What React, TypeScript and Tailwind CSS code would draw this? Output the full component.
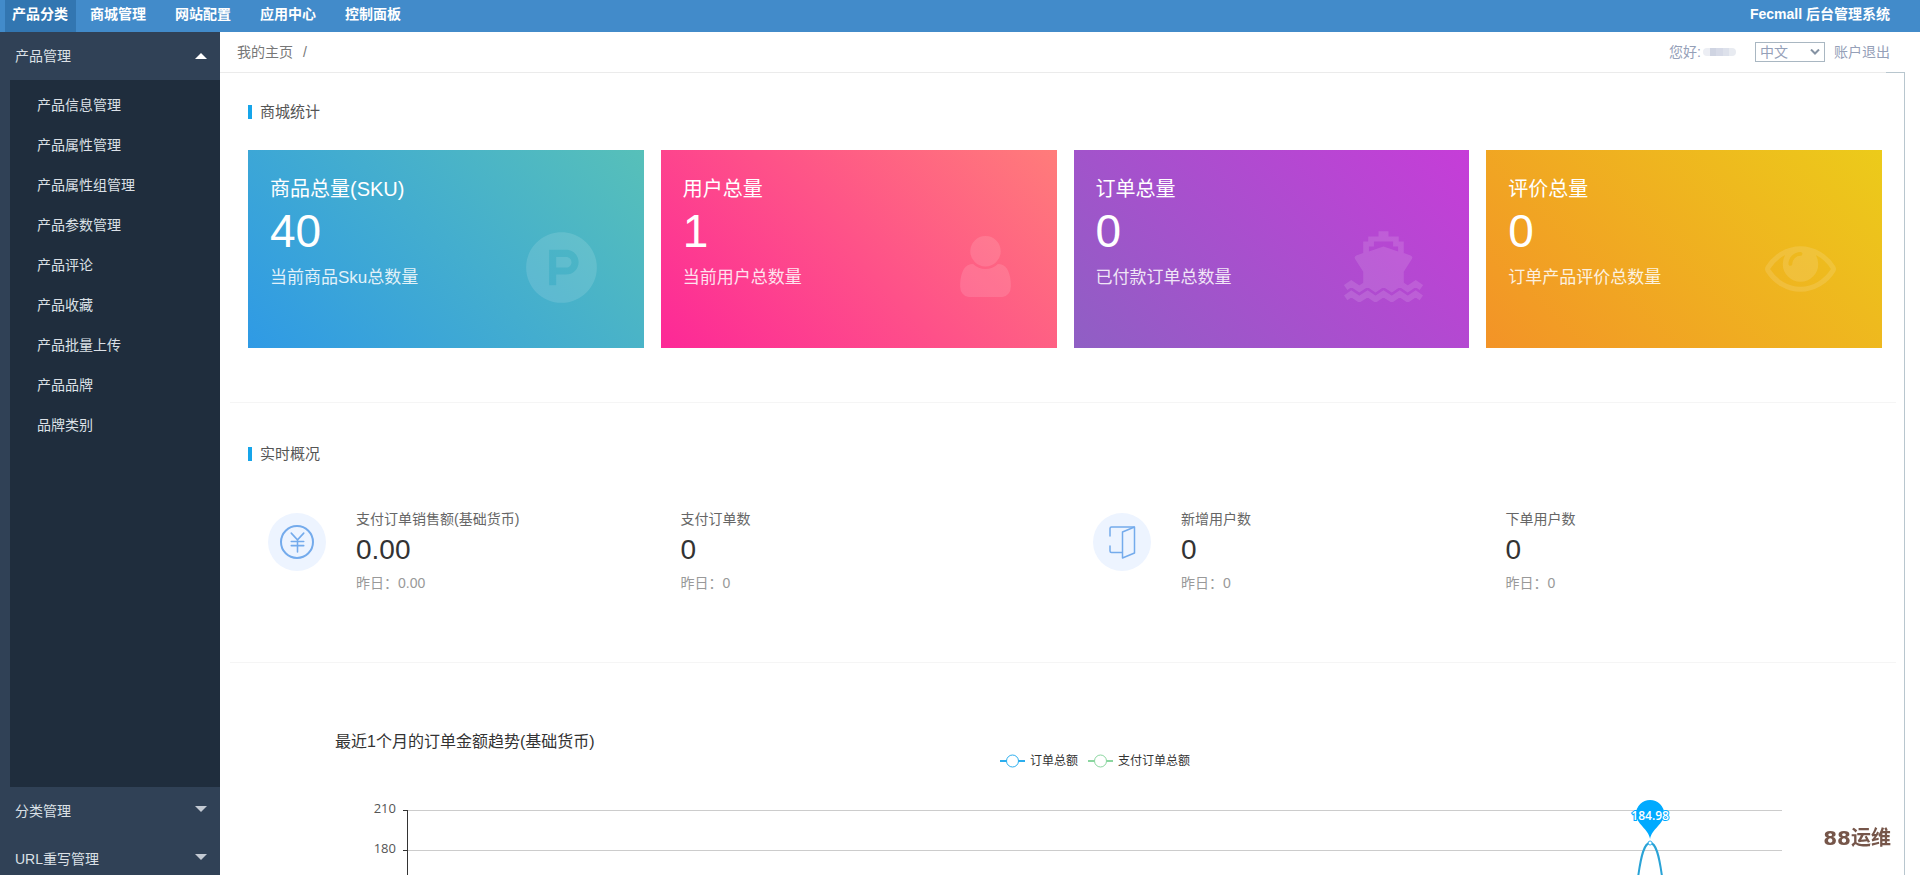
import type { ReactNode } from "react";
import { JapaneseYen } from "lucide-react";
import { FaProductHunt } from "react-icons/fa";

const NAV_ITEMS = ["商城管理", "网站配置", "应用中心", "控制面板"];

const SUB_MENU = [
  "产品信息管理",
  "产品属性管理",
  "产品属性组管理",
  "产品参数管理",
  "产品评论",
  "产品收藏",
  "产品批量上传",
  "产品品牌",
  "品牌类别",
];

const CARDS = [
  {
    title: "商品总量(SKU)",
    value: "40",
    note: "当前商品Sku总数量",
    color: "from-[#2f9ae5] to-[#57c0b9]",
    icon: <FaProductHunt className="size-[73px]" />,
  },
  {
    title: "用户总量",
    value: "1",
    note: "当前用户总数量",
    color: "from-[#fd2897] to-[#ff7c7a]",
    icon: <UserIcon />,
  },
  {
    title: "订单总量",
    value: "0",
    note: "已付款订单总数量",
    color: "from-[#8f5fc4] to-[#c63dd8]",
    icon: <ShipIcon />,
  },
  {
    title: "评价总量",
    value: "0",
    note: "订单产品评价总数量",
    color: "from-[#f39327] to-[#eccb1a]",
    icon: <EyeIcon />,
  },
];

const Y_TICKS = [210, 180];

function UserIcon() {
  return (
    <svg viewBox="256 0 1280 1792" className="h-[71px] w-[51px]" fill="currentColor">
      <path d="M1536 1399q0 109-62.5 187t-150.5 78h-854q-88 0-150.5-78t-62.5-187q0-85 8.5-160.5t31.5-152 58.5-131 94-89 134.5-34.5q131 128 313 128t313-128q76 0 134.5 34.5t94 89 58.5 131 31.5 152 8.5 160.5zm-256-887q0 159-112.5 271.5t-271.5 112.5-271.5-112.5-112.5-271.5 112.5-271.5 271.5-112.5 271.5 112.5 112.5 271.5z" />
    </svg>
  );
}

function ShipIcon() {
  return (
    <svg viewBox="0 0 238 213" className="h-[71px] w-[79px]" fill="none">
      <path
        fill="currentColor"
        fillRule="evenodd"
        d="M104 0H134V16H165V31H180V66L201 73Q209 77 204 85L180 122V166H58V122L34 85Q29 77 37 73L58 66V31H73V16H104ZM90 31V46H75V61L119 46L163 61V46H148V31Z"
      />
      <g stroke="currentColor" strokeWidth="18" strokeLinejoin="miter">
        <path d="M5 170L22 158L46 174L71 158L95 174L119 158L144 174L168 158L192 174L216 158L233 170" />
        <path d="M5 201L22 189L46 205L71 189L95 205L119 189L144 205L168 189L192 205L216 189L233 201" />
      </g>
    </svg>
  );
}

function EyeIcon() {
  return (
    <svg viewBox="0 0 1792 1792" className="size-[71px]" fill="currentColor">
      <path d="M1664 960q-152-236-381-353 61 104 61 225 0 185-131.5 316.5t-316.5 131.5-316.5-131.5-131.5-316.5q0-121 61-225-229 117-381 353 133 205 333.5 326.5t434.5 121.5 434.5-121.5 333.5-326.5zm-720-384q0-20-14-34t-34-14q-125 0-214.5 89.5t-89.5 214.5q0 20 14 34t34 14 34-14 14-34q0-86 61-147t147-61q20 0 34-14t14-34zm848 384q0 34-20 69-140 230-376.5 368.5t-499.5 138.5-499.5-139-376.5-368q-20-35-20-69t20-69q140-229 376.5-368t499.5-139 499.5 139 376.5 368q20 35 20 69z" />
    </svg>
  );
}

function DoorIcon() {
  return (
    <svg
      viewBox="0 0 27 33"
      className="h-[33px] w-[27px]"
      fill="none"
      stroke="currentColor"
      strokeWidth="1.5"
      strokeLinejoin="round"
      strokeLinecap="round"
    >
      <path d="M1 10V2.5Q1 1 2.500 1H25" />
      <path d="M1 20V25Q1 26.500 2.500 26.500H13" />
      <path d="M13.500 6L25.500 1V27L13.500 32Z" />
    </svg>
  );
}

function Caret({ up }: { up?: boolean }) {
  return (
    <svg viewBox="0 0 12 6" className={up ? "h-[6px] w-3 text-white" : "mb-1 h-[6px] w-3 text-[#c3cad3]"}>
      <path fill="currentColor" d={up ? "M6 0L12 6H0Z" : "M0 0H12L6 6Z"} />
    </svg>
  );
}

function MenuTitle({ label, open }: { label: string; open?: boolean }) {
  return (
    <button className="flex h-12 w-full shrink-0 items-center justify-between pr-[13px] pl-[15px] text-[#dbe0e6]">
      {label}
      <Caret up={open} />
    </button>
  );
}

function SectionTitle({ children }: { children: ReactNode }) {
  return (
    <h2 className="flex h-[30px] items-center gap-2 pl-[18px] text-[15px] text-[#555]">
      <span className="h-[14px] w-1 bg-[#16a5ea]" />
      {children}
    </h2>
  );
}

function Stat({ label, value }: { label: string; value: string }) {
  return (
    <div>
      <p className="leading-5 text-[#666]">{label}</p>
      <p className="text-[28px] leading-[42px] text-[#333]">{value}</p>
      <p className="mt-[2px] leading-5 text-[#999]">昨日：{value}</p>
    </div>
  );
}

function StatGroup({ icon, children }: { icon: ReactNode; children: ReactNode }) {
  return (
    <div className="flex pr-[58px] pl-[30px]">
      <div className="mt-1 mr-[30px] flex size-[58px] shrink-0 items-center justify-center rounded-full bg-[#edf4ff] text-[#74abec]">
        {icon}
      </div>
      <div className="grid flex-1 grid-cols-2">{children}</div>
    </div>
  );
}

function LegendItem({ label, color }: { label: string; color: string }) {
  return (
    <span className="flex items-center gap-[5px]">
      <svg viewBox="0 0 25 14" className="h-[14px] w-[25px]" fill="#fff" stroke={color}>
        <path d="M0 7H25" strokeWidth="2" />
        <circle cx="12.5" cy="7" r="6" />
      </svg>
      {label}
    </span>
  );
}

function OrderChart() {
  return (
    <div className="pt-[69px] pr-[41px] pl-[105px]">
      <h3 className="text-base leading-5 text-[#333]">最近1个月的订单金额趋势(基础货币)</h3>
      <div className="mt-px flex h-4 items-center justify-center gap-[10px] text-xs text-[#333]">
        <LegendItem label="订单总额" color="#2caeee" />
        <LegendItem label="支付订单总额" color="#8bd6a0" />
      </div>
      <div className="mt-[26px] px-[73px]">
        <svg className="h-20 w-full overflow-visible">
          {Y_TICKS.map((tick, i) => (
            <g key={tick}>
              <line x1="0" x2="100%" y1={15.5 + i * 40} y2={15.5 + i * 40} stroke="#ccc" />
              <line x1="-5" x2="0" y1={15.5 + i * 40} y2={15.5 + i * 40} stroke="#333" />
              <text
                x="-12"
                y={18 + i * 40}
                textAnchor="end"
                className="fill-[#555] font-['Open_Sans',sans-serif] text-[13px]"
              >
                {tick}
              </text>
            </g>
          ))}
          <line x1="-0.5" x2="-0.5" y1="15" y2="80" stroke="#333" />
          <svg x="90.4%" y="0" className="overflow-visible">
            <path
              d="M-12 82C-9 60 -6 48 0 48C6 48 9 60 12 82"
              fill="none"
              stroke="#2aa3d6"
              strokeWidth="2"
            />
            <path
              d="M0 44C-1.500 34 -14 29 -14 19A14 14 0 0 1 14 19C14 29 1.500 34 0 44Z"
              fill="#00aaff"
            />
            <circle cx="0" cy="48" r="2" fill="#fff" stroke="#2caeee" />
            <text
              x="0"
              y="25"
              textAnchor="middle"
              stroke="#00aaff"
              strokeWidth="2"
              paintOrder="stroke"
              className="fill-white font-['Open_Sans',sans-serif] text-[12px] font-semibold"
            >
              184.98
            </text>
          </svg>
        </svg>
      </div>
    </div>
  );
}

export default function App() {
  return (
    <div className="flex h-screen flex-col overflow-hidden bg-white font-['Liberation_Sans','Noto_Sans_CJK_SC',sans-serif] text-sm">
      <header className="flex h-8 shrink-0 items-stretch justify-between bg-[#428bca] font-bold text-white">
        <nav className="flex pl-[5px]">
          <a href="#" className="flex items-center bg-[#3276b1] pr-2 pb-1 pl-[7px]">
            产品分类
          </a>
          {NAV_ITEMS.map((item) => (
            <a key={item} href="#" className="flex items-center pr-[15px] pb-1 pl-[14px]">
              {item}
            </a>
          ))}
        </nav>
        <span className="flex items-center pr-[30px] pb-1">Fecmall 后台管理系统</span>
      </header>

      <div className="flex min-h-0 flex-1">
        <aside className="-mb-2 flex w-[220px] shrink-0 flex-col bg-[#304156]">
          <MenuTitle label="产品管理" open />
          <ul className="ml-[10px] flex-1 bg-[#1f2d3d] pt-[5px]">
            {SUB_MENU.map((item) => (
              <li key={item}>
                <a href="#" className="flex h-10 items-center pl-[27px] text-[#dbe0e6]">
                  {item}
                </a>
              </li>
            ))}
          </ul>
          <MenuTitle label="分类管理" />
          <MenuTitle label="URL重写管理" />
        </aside>

        <main className="flex min-w-0 flex-1 flex-col">
          <div className="flex h-10 shrink-0 items-center pr-[30px] pl-[17px] text-[#95a0b8]">
            <a href="#" className="text-[#777]">
              我的主页
            </a>
            <span className="ml-[10px] text-[#777]">/</span>
            <span className="ml-auto">您好:</span>
            {/* masked account name */}
            <span className="mr-[19px] ml-[2px] flex h-2 w-[33px] overflow-hidden rounded-sm">
              <span className="flex-1 bg-[#eceef4]" />
              <span className="flex-1 bg-[#cfd4e2]" />
              <span className="flex-1 bg-[#d6dae7]" />
              <span className="flex-1 bg-[#dde1eb]" />
              <span className="flex-1 bg-[#e8ebf1]" />
            </span>
            <span className="relative mr-[9px]">
              <select
                aria-label="语言"
                className="block h-5 w-[70px] appearance-none border border-[#a9b7c2] bg-white pl-1 text-sm leading-4 text-[#95a0b8]"
              >
                <option>中文</option>
                <option>English</option>
              </select>
              <svg
                viewBox="0 0 10 6"
                className="pointer-events-none absolute top-[7px] right-[5px] h-[6px] w-[10px]"
                fill="none"
                stroke="#8592a3"
                strokeWidth="2"
              >
                <path d="M1 0.500L5 4.500L9 0.500" />
              </svg>
            </span>
            <a href="#">账户退出</a>
          </div>
          <div className="flex h-px shrink-0 pr-[15px]">
            <span className="flex-1 bg-[#ebebeb]" />
            <span className="w-[19px] bg-[#b8c6ce]" />
          </div>

          <div className="mr-[15px] min-h-0 flex-1 overflow-hidden border-r border-[#b8c6ce] pr-2 pl-[10px]">
            <section className="border-b border-[#f5f5f5] pt-6 pb-[54px]">
              <SectionTitle>商城统计</SectionTitle>
              <div className="mt-[23px] grid grid-cols-4 gap-[17px] pr-[14px] pl-[18px]">
                {CARDS.map((card) => (
                  <div
                    key={card.title}
                    className={`flex h-[198px] items-start justify-between bg-linear-45/srgb pr-[46px] pl-[22px] text-white ${card.color}`}
                  >
                    <div className="pt-6">
                      <p className="text-xl leading-[30px]">{card.title}</p>
                      <p className="text-[46px] leading-[54px]">{card.value}</p>
                      <p className="mt-2 text-[17px] leading-6 opacity-85">{card.note}</p>
                    </div>
                    <div className="mt-[81px] opacity-12">{card.icon}</div>
                  </div>
                ))}
              </div>
            </section>

            <section className="border-b border-[#f5f5f5] pt-9 pb-[69px]">
              <SectionTitle>实时概况</SectionTitle>
              <div className="mt-10 grid grid-cols-2 px-2">
                <StatGroup
                  icon={
                    <span className="flex size-[34px] items-center justify-center rounded-full border-2 border-current">
                      <JapaneseYen className="size-[25px]" strokeWidth={1.5} />
                    </span>
                  }
                >
                  <Stat label="支付订单销售额(基础货币)" value="0.00" />
                  <Stat label="支付订单数" value="0" />
                </StatGroup>
                <StatGroup icon={<DoorIcon />}>
                  <Stat label="新增用户数" value="0" />
                  <Stat label="下单用户数" value="0" />
                </StatGroup>
              </div>
            </section>

            <OrderChart />
          </div>
        </main>
      </div>

      <span className="fixed right-[29px] bottom-[25px] font-['DejaVu_Sans','Noto_Sans_CJK_SC',sans-serif] text-xl leading-6 font-bold text-[#76564a]">
        88运维
      </span>
    </div>
  );
}
